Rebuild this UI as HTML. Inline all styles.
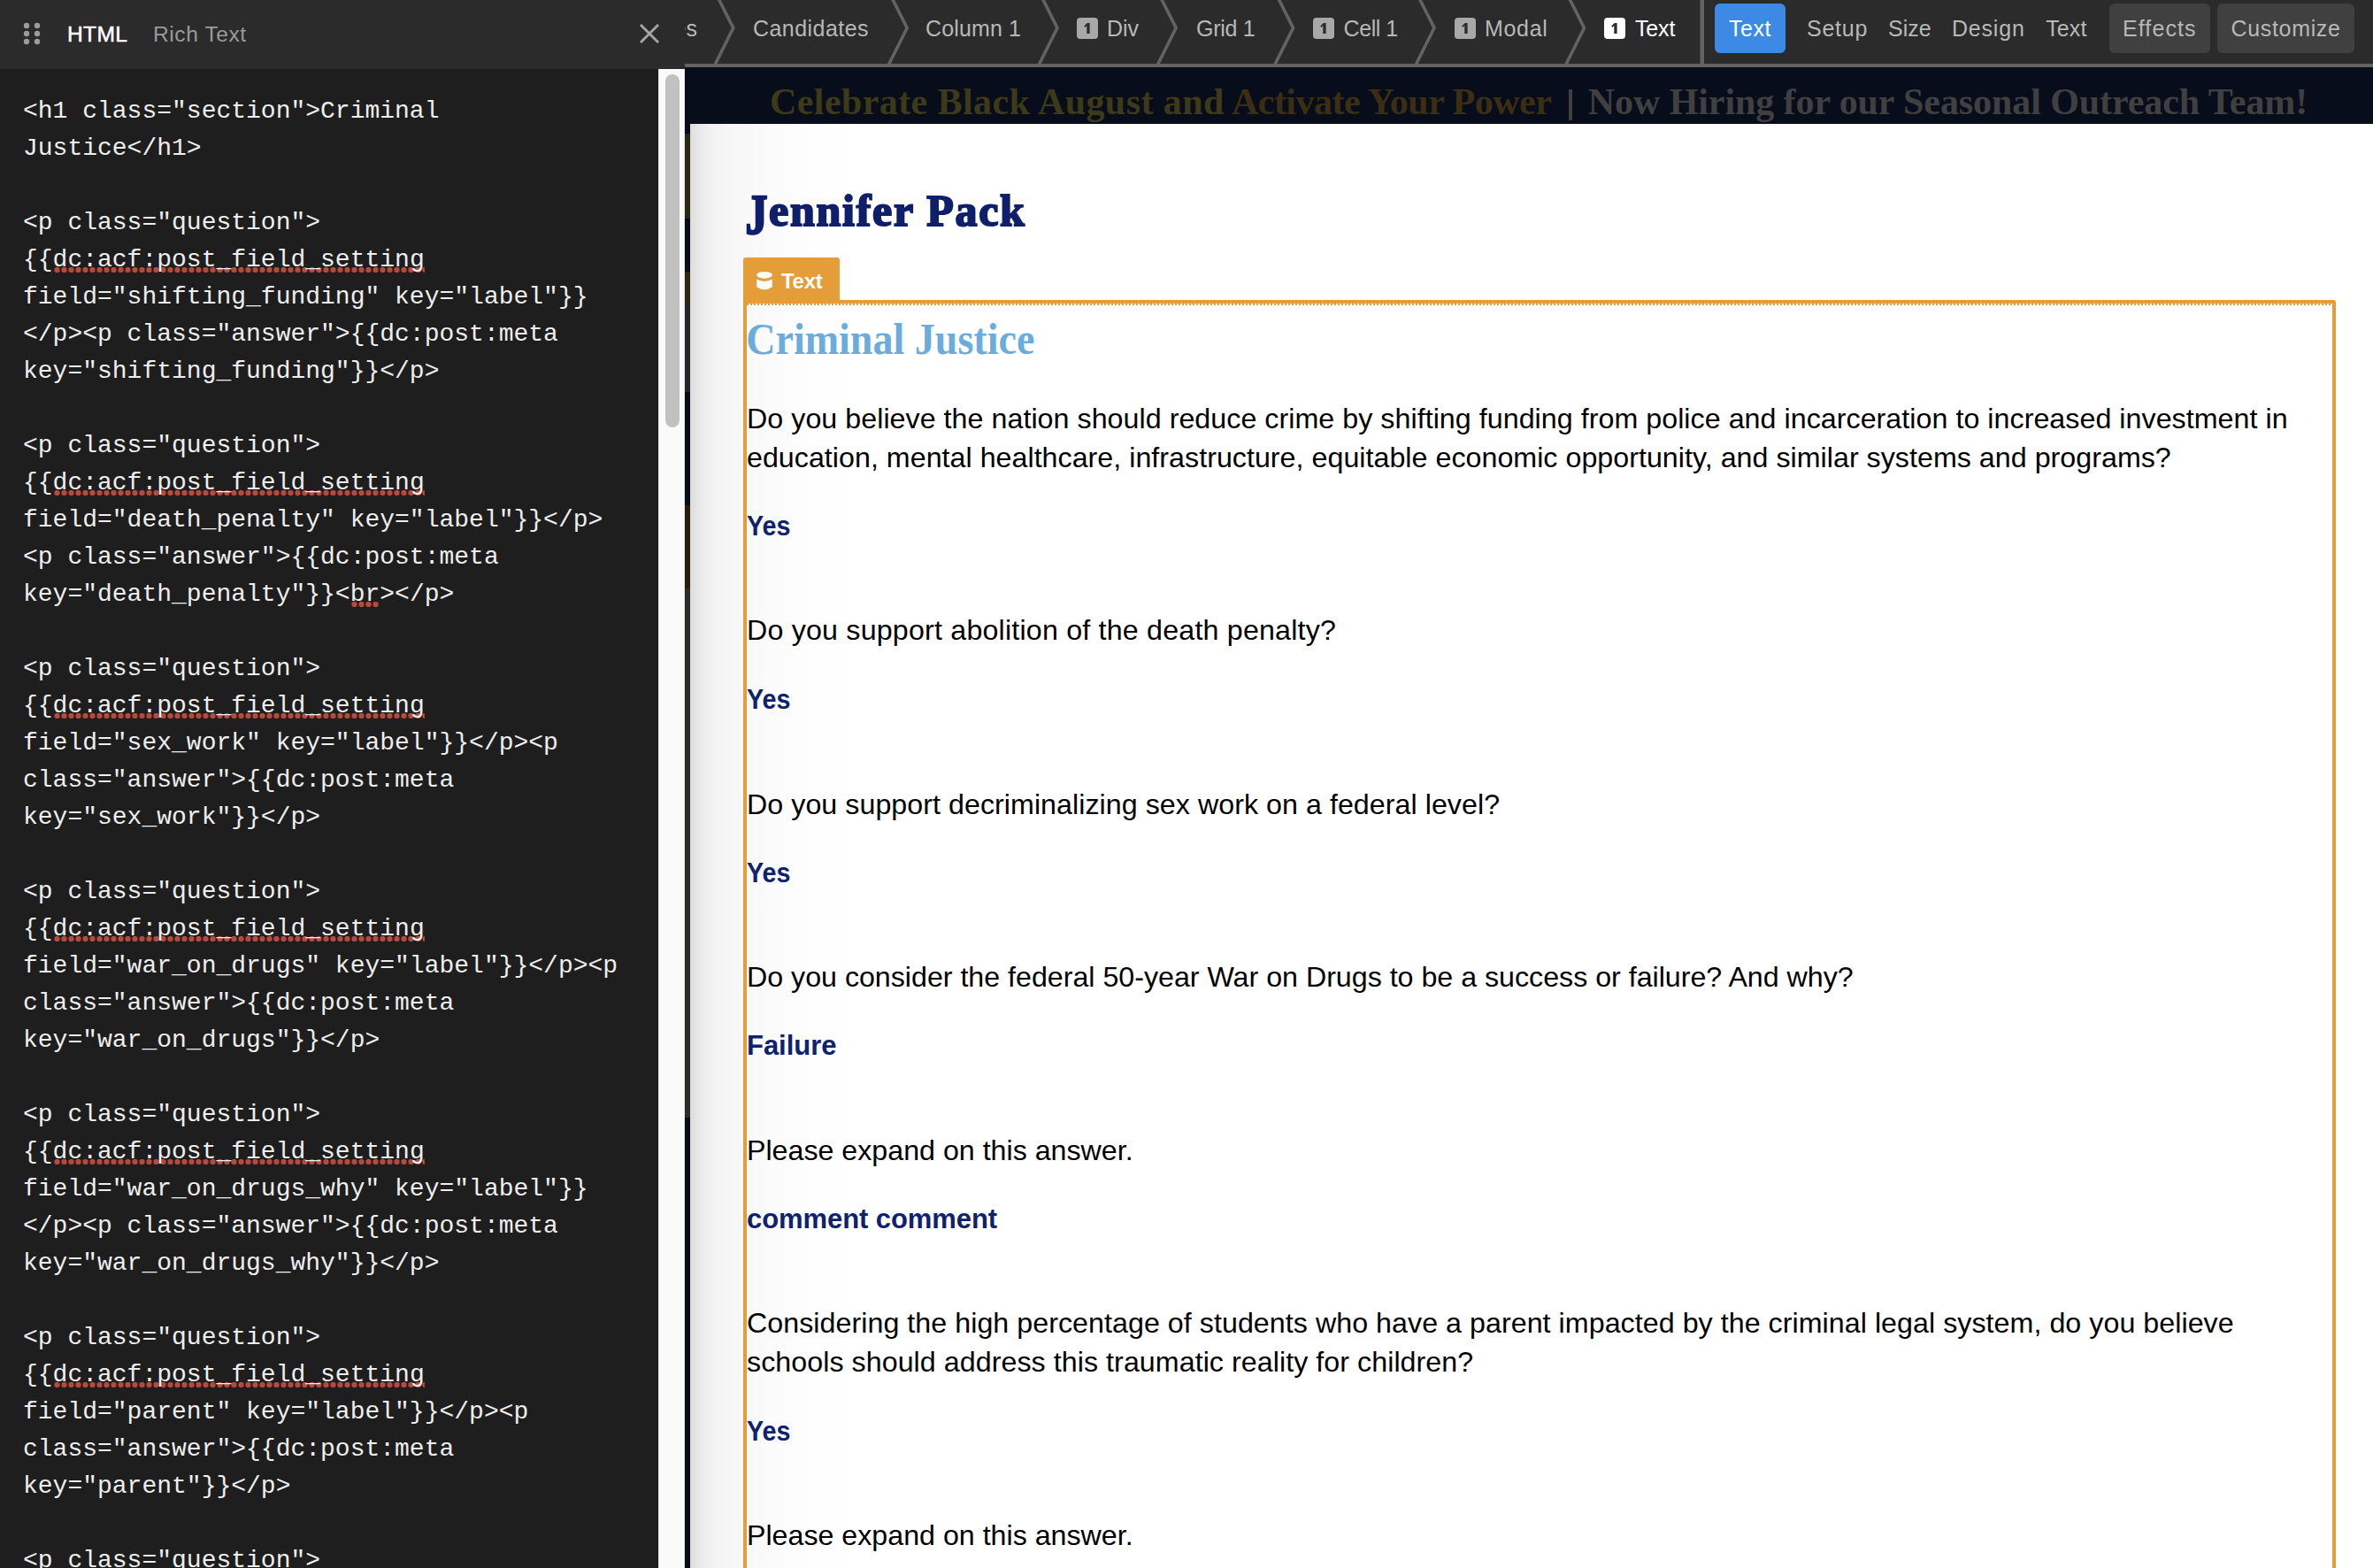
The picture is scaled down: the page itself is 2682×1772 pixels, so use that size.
<!DOCTYPE html><html><head><meta charset="utf-8"><style>
*{margin:0;padding:0;box-sizing:border-box}
html,body{width:2682px;height:1772px;overflow:hidden;background:#1e1e1e}
.t{position:absolute;white-space:pre}
.a{position:absolute}
.sp{background-image:radial-gradient(circle at 4px 3px,#b9493d 2.9px,transparent 3.4px);background-size:8px 6px;background-repeat:repeat-x;background-position:0.5px 24.3px}
</style></head><body><div class="a" style="left:0;top:0;width:2682px;height:72px;background:#2b2b2b"></div>
<div class="a" style="left:0;top:72px;width:2682px;height:4px;background:#636363"></div>
<div class="a" style="left:774px;top:76px;width:1908px;height:64px;background:#070d1a"></div>
<div class="a" style="left:780px;top:140px;width:1902px;height:1632px;background:linear-gradient(to right,#dcdcdc 0px,#e9e9e9 10px,#f2f2f2 25px,#f7f7f7 50px,#fbfbfb 90px,#fefefe 140px,#ffffff 200px)"></div>
<div class="a" style="left:774px;top:140px;width:6px;height:1632px;background:linear-gradient(to bottom,#070c18 0px,#070c18 11px,#2a2610 11px,#2a2610 107px,#070c18 107px,#070c18 167px,#2a2610 167px,#2a2610 203px,#22262b 203px,#22262b 303px,#070c18 303px,#070c18 431px,#2a1c08 431px,#2a1c08 525px,#2e2c26 525px,#2e2c26 1123px,#070c18 1123px,#070c18 1632px)"></div>
<svg class="a" style="left:0;top:0" width="2682" height="72" viewBox="0 0 2682 72"><polyline points="808.3,-9 828.8,31.6 808.3,72.5" fill="none" stroke="#636363" stroke-width="3.6"/><polyline points="1004.7,-9 1025.2,31.6 1004.7,72.5" fill="none" stroke="#636363" stroke-width="3.6"/><polyline points="1174.5,-9 1195,31.6 1174.5,72.5" fill="none" stroke="#636363" stroke-width="3.6"/><polyline points="1308.7,-9 1329.2,31.6 1308.7,72.5" fill="none" stroke="#636363" stroke-width="3.6"/><polyline points="1441.1,-9 1461.6,31.6 1441.1,72.5" fill="none" stroke="#636363" stroke-width="3.6"/><polyline points="1600.5,-9 1621,31.6 1600.5,72.5" fill="none" stroke="#636363" stroke-width="3.6"/><polyline points="1770.0,-9 1790.5,31.6 1770.0,72.5" fill="none" stroke="#636363" stroke-width="3.6"/><rect x="1921.5" y="0" width="4.5" height="72" fill="#636363"/></svg>
<div class="a" style="left:774px;top:0;width:20px;height:72px;overflow:hidden"><div class="t" style="right:6px;top:17.1px;font-family:'Liberation Sans', sans-serif;font-size:25px;line-height:30px;color:#b8b8b8">es</div></div>
<div class="t" style="left:851.00px;top:17.14px;font-family:'Liberation Sans', sans-serif;font-size:25px;line-height:30.0px;color:#b8b8b8;font-weight:400;letter-spacing:0.444px;">Candidates</div>
<div class="t" style="left:1046.00px;top:17.14px;font-family:'Liberation Sans', sans-serif;font-size:25px;line-height:30.0px;color:#b8b8b8;font-weight:400;letter-spacing:0.143px;">Column 1</div>
<div class="a" style="left:1217px;top:20px;width:24px;height:24px;border-radius:4px;background:#a8a8a8"></div>
<svg class="a" style="left:1217px;top:20px" width="24" height="24" viewBox="0 0 24 24"><path d="M11.3 6 H14.6 V18 H11.3 Z M8.3 9.5 L11.6 6 L12.3 8.0 L9.3 11.0 Z" fill="#2b2b2b"/></svg>
<div class="t" style="left:1251.00px;top:17.14px;font-family:'Liberation Sans', sans-serif;font-size:25px;line-height:30.0px;color:#b8b8b8;font-weight:400;">Div</div>
<div class="t" style="left:1352.00px;top:17.14px;font-family:'Liberation Sans', sans-serif;font-size:25px;line-height:30.0px;color:#b8b8b8;font-weight:400;letter-spacing:-0.300px;">Grid 1</div>
<div class="a" style="left:1484px;top:20px;width:24px;height:24px;border-radius:4px;background:#a8a8a8"></div>
<svg class="a" style="left:1484px;top:20px" width="24" height="24" viewBox="0 0 24 24"><path d="M11.3 6 H14.6 V18 H11.3 Z M8.3 9.5 L11.6 6 L12.3 8.0 L9.3 11.0 Z" fill="#2b2b2b"/></svg>
<div class="t" style="left:1518.60px;top:17.14px;font-family:'Liberation Sans', sans-serif;font-size:25px;line-height:30.0px;color:#b8b8b8;font-weight:400;letter-spacing:-0.460px;">Cell 1</div>
<div class="a" style="left:1644px;top:20px;width:24px;height:24px;border-radius:4px;background:#a8a8a8"></div>
<svg class="a" style="left:1644px;top:20px" width="24" height="24" viewBox="0 0 24 24"><path d="M11.3 6 H14.6 V18 H11.3 Z M8.3 9.5 L11.6 6 L12.3 8.0 L9.3 11.0 Z" fill="#2b2b2b"/></svg>
<div class="t" style="left:1678.00px;top:17.14px;font-family:'Liberation Sans', sans-serif;font-size:25px;line-height:30.0px;color:#b8b8b8;font-weight:400;letter-spacing:0.675px;">Modal</div>
<div class="a" style="left:1813px;top:20px;width:24px;height:24px;border-radius:4px;background:#ffffff"></div>
<svg class="a" style="left:1813px;top:20px" width="24" height="24" viewBox="0 0 24 24"><path d="M11.3 6 H14.6 V18 H11.3 Z M8.3 9.5 L11.6 6 L12.3 8.0 L9.3 11.0 Z" fill="#2b2b2b"/></svg>
<div class="t" style="left:1848.00px;top:17.14px;font-family:'Liberation Sans', sans-serif;font-size:25px;line-height:30.0px;color:#ffffff;font-weight:400;letter-spacing:-0.167px;">Text</div>
<div class="a" style="left:1938px;top:4px;width:80px;height:56px;border-radius:6px;background:#3d8ae6"></div>
<div class="t" style="left:1954.00px;top:17.14px;font-family:'Liberation Sans', sans-serif;font-size:25px;line-height:30.0px;color:#ffffff;font-weight:400;letter-spacing:0.500px;">Text</div>
<div class="t" style="left:2042.00px;top:17.14px;font-family:'Liberation Sans', sans-serif;font-size:25px;line-height:30.0px;color:#b8b8b8;font-weight:400;letter-spacing:0.750px;">Setup</div>
<div class="t" style="left:2134.00px;top:17.14px;font-family:'Liberation Sans', sans-serif;font-size:25px;line-height:30.0px;color:#b8b8b8;font-weight:400;">Size</div>
<div class="t" style="left:2206.00px;top:17.14px;font-family:'Liberation Sans', sans-serif;font-size:25px;line-height:30.0px;color:#b8b8b8;font-weight:400;letter-spacing:0.800px;">Design</div>
<div class="t" style="left:2312.20px;top:17.14px;font-family:'Liberation Sans', sans-serif;font-size:25px;line-height:30.0px;color:#b8b8b8;font-weight:400;letter-spacing:0.133px;">Text</div>
<div class="a" style="left:2384px;top:4px;width:114px;height:56px;border-radius:6px;background:#404040"></div>
<div class="t" style="left:2399.00px;top:17.14px;font-family:'Liberation Sans', sans-serif;font-size:25px;line-height:30.0px;color:#b8b8b8;font-weight:400;letter-spacing:1.100px;">Effects</div>
<div class="a" style="left:2506px;top:4px;width:155px;height:56px;border-radius:6px;background:#404040"></div>
<div class="t" style="left:2521.60px;top:17.14px;font-family:'Liberation Sans', sans-serif;font-size:25px;line-height:30.0px;color:#b8b8b8;font-weight:400;letter-spacing:0.650px;">Customize</div>
<div class="t" style="left:870.00px;top:89.93px;font-family:'Liberation Serif', serif;font-size:42px;line-height:50.4px;color:#3e3a17;font-weight:700;letter-spacing:0.416px;">Celebrate Black August and</div>
<div class="t" style="left:1391.90px;top:89.93px;font-family:'Liberation Serif', serif;font-size:42px;line-height:50.4px;color:#3c2e12;font-weight:700;letter-spacing:-0.494px;">Activate Your Power</div>
<div class="a" style="left:1773px;top:101px;width:3.7px;height:35px;background:#3f3f3f"></div>
<div class="t" style="left:1794.80px;top:89.93px;font-family:'Liberation Serif', serif;font-size:42px;line-height:50.4px;color:#404040;font-weight:700;letter-spacing:-0.080px;">Now Hiring for our Seasonal Outreach Team!</div>
<div class="t" style="left:842.40px;top:207.82px;font-family:'Liberation Serif', serif;font-size:50px;line-height:60.0px;color:#0f1f6b;font-weight:700;letter-spacing:1.717px;-webkit-text-stroke:2px #0f1f6b;"><span style="display:inline-block;transform:scaleY(1.28);transform-origin:50% 14px">J</span>ennifer Pack</div>
<div class="a" style="left:840px;top:291px;width:109px;height:49px;border-radius:3px 3px 0 0;background:#e59d3a"></div>
<svg class="a" style="left:854px;top:306px" width="20" height="22" viewBox="0 0 20 22"><ellipse cx="10" cy="4.8" rx="8.8" ry="3.9" fill="#fff"/><path d="M1.2 9.6 Q10 14.2 18.8 9.6 L18.8 18.2 Q10 24.2 1.2 18.2 Z" fill="#fff"/></svg>
<div class="t" style="left:883.00px;top:303.78px;font-family:'Liberation Sans', sans-serif;font-size:24px;line-height:28.8px;color:#ffffff;font-weight:700;letter-spacing:-0.300px;">Text</div>
<div class="a" style="left:840px;top:339px;width:1800px;height:1500px;border:4px solid #e59d3a;border-radius:0 3px 0 0"></div>
<div class="a" style="left:844px;top:343px;width:1792px;height:2px;background-image:linear-gradient(to right,#e59d3a 50%,transparent 50%);background-size:4px 2px"></div>
<div class="t" style="left:842.80px;top:352.82px;font-family:'Liberation Serif', serif;font-size:50px;line-height:60.0px;color:#6aacdc;font-weight:700;transform:scaleX(0.9209);transform-origin:3px 0;">Criminal Justice</div>
<div class="t" style="left:844.00px;top:451.04px;font-family:'Liberation Sans', sans-serif;font-size:32.2px;line-height:44px;color:#000000;font-weight:400;letter-spacing:0.050px;">Do you believe the nation should reduce crime by shifting funding from police and incarceration to increased investment in</div>
<div class="t" style="left:844.00px;top:494.94px;font-family:'Liberation Sans', sans-serif;font-size:32.2px;line-height:44px;color:#000000;font-weight:400;letter-spacing:0.034px;">education, mental healthcare, infrastructure, equitable economic opportunity, and similar systems and programs?</div>
<div class="t" style="left:844.00px;top:573.26px;font-family:'Liberation Sans', sans-serif;font-size:31px;line-height:44px;color:#0f2270;font-weight:700;transform:scaleX(0.9255);transform-origin:0px 0;">Yes</div>
<div class="t" style="left:844.00px;top:690.34px;font-family:'Liberation Sans', sans-serif;font-size:32.2px;line-height:44px;color:#000000;font-weight:400;letter-spacing:0.204px;">Do you support abolition of the death penalty?</div>
<div class="t" style="left:844.00px;top:769.26px;font-family:'Liberation Sans', sans-serif;font-size:31px;line-height:44px;color:#0f2270;font-weight:700;transform:scaleX(0.9255);transform-origin:0px 0;">Yes</div>
<div class="t" style="left:844.00px;top:887.34px;font-family:'Liberation Sans', sans-serif;font-size:32.2px;line-height:44px;color:#000000;font-weight:400;letter-spacing:0.052px;">Do you support decriminalizing sex work on a federal level?</div>
<div class="t" style="left:844.00px;top:964.76px;font-family:'Liberation Sans', sans-serif;font-size:31px;line-height:44px;color:#0f2270;font-weight:700;transform:scaleX(0.9255);transform-origin:0px 0;">Yes</div>
<div class="t" style="left:844.00px;top:1081.64px;font-family:'Liberation Sans', sans-serif;font-size:32.2px;line-height:44px;color:#000000;font-weight:400;letter-spacing:-0.006px;">Do you consider the federal 50-year War on Drugs to be a success or failure? And why?</div>
<div class="t" style="left:844.00px;top:1160.26px;font-family:'Liberation Sans', sans-serif;font-size:31px;line-height:44px;color:#0f2270;font-weight:700;letter-spacing:-0.033px;">Failure</div>
<div class="t" style="left:844.00px;top:1278.04px;font-family:'Liberation Sans', sans-serif;font-size:32.2px;line-height:44px;color:#000000;font-weight:400;">Please expand on this answer.</div>
<div class="t" style="left:844.00px;top:1356.06px;font-family:'Liberation Sans', sans-serif;font-size:31px;line-height:44px;color:#0f2270;font-weight:700;letter-spacing:-0.079px;">comment comment</div>
<div class="t" style="left:844.00px;top:1473.24px;font-family:'Liberation Sans', sans-serif;font-size:32.2px;line-height:44px;color:#000000;font-weight:400;letter-spacing:0.052px;">Considering the high percentage of students who have a parent impacted by the criminal legal system, do you believe</div>
<div class="t" style="left:844.00px;top:1517.24px;font-family:'Liberation Sans', sans-serif;font-size:32.2px;line-height:44px;color:#000000;font-weight:400;letter-spacing:0.062px;">schools should address this traumatic reality for children?</div>
<div class="t" style="left:844.00px;top:1596.06px;font-family:'Liberation Sans', sans-serif;font-size:31px;line-height:44px;color:#0f2270;font-weight:700;transform:scaleX(0.9255);transform-origin:0px 0;">Yes</div>
<div class="t" style="left:844.00px;top:1713.34px;font-family:'Liberation Sans', sans-serif;font-size:32.2px;line-height:44px;color:#000000;font-weight:400;">Please expand on this answer.</div>
<div class="a" style="left:0;top:0;width:774px;height:78px;background:#2b2b2b"></div>
<div class="a" style="left:0;top:78px;width:744px;height:1694px;background:#1e1e1e"></div>
<div class="a" style="left:744px;top:78px;width:30px;height:1694px;background:#fafafa;border-left:1px solid #e4e4e4;border-right:1px solid #e4e4e4"></div>
<div class="a" style="left:752px;top:84px;width:16px;height:399px;border-radius:8px;background:#c1c1c1"></div>
<svg class="a" style="left:0;top:0" width="80" height="78"><circle cx="30" cy="29" r="3.2" fill="#9c9c9c"/><circle cx="30" cy="38" r="3.2" fill="#9c9c9c"/><circle cx="30" cy="47" r="3.2" fill="#9c9c9c"/><circle cx="42" cy="29" r="3.2" fill="#9c9c9c"/><circle cx="42" cy="38" r="3.2" fill="#9c9c9c"/><circle cx="42" cy="47" r="3.2" fill="#9c9c9c"/></svg>
<div class="t" style="left:76.00px;top:24.12px;font-family:'Liberation Sans', sans-serif;font-size:24.6px;line-height:29.52px;color:#ffffff;font-weight:400;letter-spacing:0.333px;-webkit-text-stroke:0.5px #ffffff;">HTML</div>
<div class="t" style="left:173.00px;top:24.12px;font-family:'Liberation Sans', sans-serif;font-size:24.6px;line-height:29.52px;color:#9a9a9a;font-weight:400;letter-spacing:0.562px;">Rich Text</div>
<svg class="a" style="left:720px;top:24px" width="28" height="28" viewBox="0 0 28 28"><path d="M4 4 L24 24 M24 4 L4 24" stroke="#a5a5a5" stroke-width="2.9"/></svg>
<div class="t" style="left:26.00px;top:104.84px;font-family:'Liberation Mono', monospace;font-size:28px;line-height:42px;color:#eeeeee;font-weight:400;">&lt;h1 class="section"&gt;Criminal
Justice&lt;/h1&gt;

&lt;p class="question"&gt;
{{<span class="sp">dc:acf:post_field_setting</span>
field="shifting_funding" key="label"}}
&lt;/p&gt;&lt;p class="answer"&gt;{{dc:post:meta
key="shifting_funding"}}&lt;/p&gt;

&lt;p class="question"&gt;
{{<span class="sp">dc:acf:post_field_setting</span>
field="death_penalty" key="label"}}&lt;/p&gt;
&lt;p class="answer"&gt;{{dc:post:meta
key="death_penalty"}}&lt;<span class="sp">br</span>&gt;&lt;/p&gt;

&lt;p class="question"&gt;
{{<span class="sp">dc:acf:post_field_setting</span>
field="sex_work" key="label"}}&lt;/p&gt;&lt;p
class="answer"&gt;{{dc:post:meta
key="sex_work"}}&lt;/p&gt;

&lt;p class="question"&gt;
{{<span class="sp">dc:acf:post_field_setting</span>
field="war_on_drugs" key="label"}}&lt;/p&gt;&lt;p
class="answer"&gt;{{dc:post:meta
key="war_on_drugs"}}&lt;/p&gt;

&lt;p class="question"&gt;
{{<span class="sp">dc:acf:post_field_setting</span>
field="war_on_drugs_why" key="label"}}
&lt;/p&gt;&lt;p class="answer"&gt;{{dc:post:meta
key="war_on_drugs_why"}}&lt;/p&gt;

&lt;p class="question"&gt;
{{<span class="sp">dc:acf:post_field_setting</span>
field="parent" key="label"}}&lt;/p&gt;&lt;p
class="answer"&gt;{{dc:post:meta
key="parent"}}&lt;/p&gt;

&lt;p class="question"&gt;</div></body></html>
